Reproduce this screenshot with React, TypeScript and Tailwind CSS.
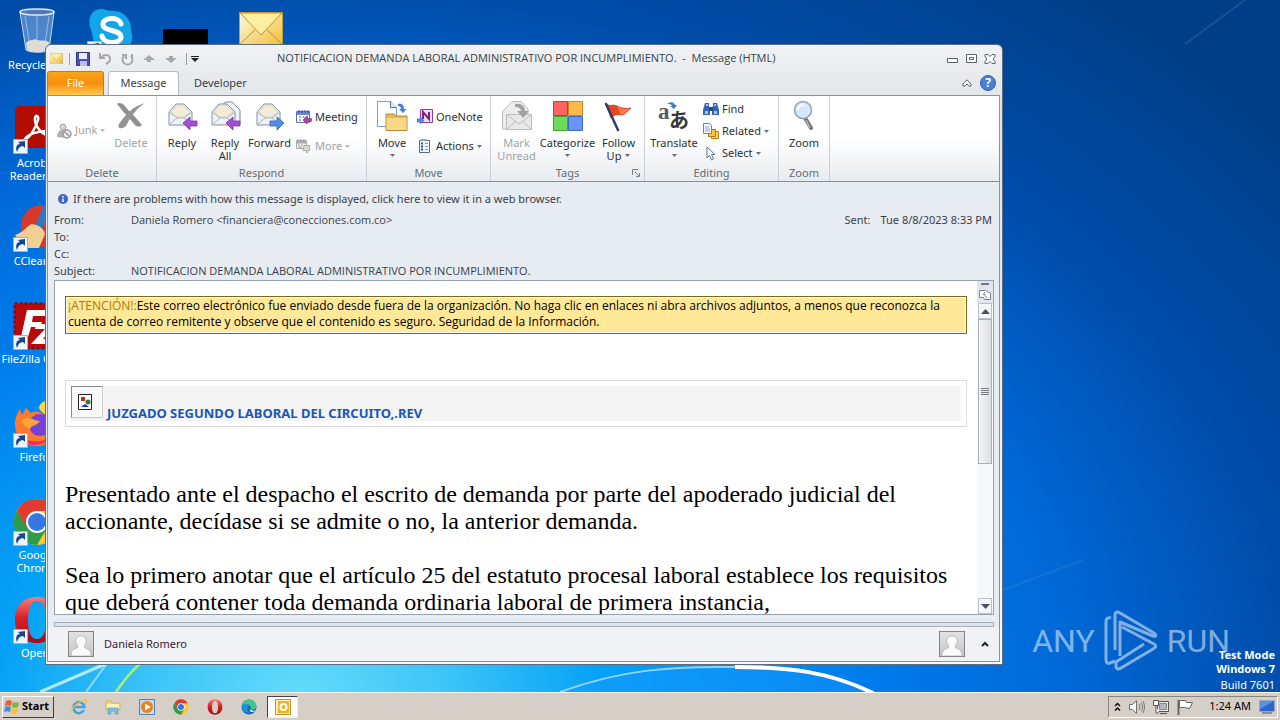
import React from 'react';
import clsx from 'clsx';

type IconProps = { className?: string };

const Caret: React.FC<IconProps> = ({ className }) => (
  <svg viewBox="0 0 5 3" className={clsx('w-[5px] h-[3px] shrink-0', className)}>
    <path d="M0 0h5L2.5 3z" fill="currentColor" />
  </svg>
);

const Envelope: React.FC<IconProps> = ({ className }) => (
  <svg viewBox="0 0 44 34" preserveAspectRatio="none" className={className}>
    <defs>
      <linearGradient id="env" x1="0" y1="0" x2="1" y2="1">
        <stop offset="0" stopColor="#fffbe0" />
        <stop offset="1" stopColor="#f0bd38" />
      </linearGradient>
    </defs>
    <path d="M.5.5h43v33H.5z" fill="url(#env)" stroke="#c99a2e" />
    <path d="M1 32 17 17M43 32 27 17" stroke="#c2922c" fill="none" />
    <path d="M1 1l21 22L43 1z" fill="#fdeea0" stroke="#c2922c" />
  </svg>
);

/* Ribbon icons, 32px */

const OpenMail: React.FC<{ arrow: 'left' | 'right'; double?: boolean }> = ({ arrow, double }) => (
  <svg viewBox="0 0 32 32" className="w-8 h-8">
    {double && (
      <path d="M9 8 17 2h6l8 8v14H12z" fill="#f2f3f6" stroke="#7f8898" />
    )}
    <path d="M3 12 10 4h8l8 8v13H3z" fill="#eef1f6" stroke="#8390a5" />
    <path d="M5 12l6-7h6l7 7-7 5h-6z" fill="#f3ecd6" stroke="#c9c4b0" strokeWidth=".6" />
    <path d="M3 12l8 6h7l8-6M3 25l8-7M26 25l-8-7" fill="none" stroke="#a9b5c7" />
    {arrow === 'left' ? (
      <path d="M17 23l7-6v4h7v5h-7v4z" fill="#a44fd0" stroke="#7c35a8" strokeWidth=".8" />
    ) : (
      <path d="M30 23l-7-6v4h-7v5h7v4z" fill="#5590e8" stroke="#2c5fb4" strokeWidth=".8" />
    )}
  </svg>
);

const DeleteIcon = () => (
  <svg viewBox="0 0 32 32" className="w-8 h-8">
    <path d="M2 4c2-2 5-1 7 1 3 4 7 8 11 12 3 3 5 6 7 8-2 2-5 2-7 0C15 19 8 12 2 4z" fill="#8f8f8f" />
    <path d="M30 3c-7 4-12 11-17 19-1 3-3 6-6 6-2 1-5-1-3-4C10 15 18 6 30 3z" fill="#949494" />
  </svg>
);

const JunkIcon = () => (
  <svg viewBox="0 0 16 16" className="w-4 h-4">
    <circle cx="7" cy="4" r="3" fill="#d8d8d8" stroke="#a2a2a2" />
    <path d="M1 14c0-4 2-7 5-7s5 2 5 5l-2 3z" fill="#b2b2b2" />
    <circle cx="11" cy="11" r="4" fill="#e9e9e9" stroke="#9a9a9a" strokeWidth="1.5" />
    <path d="M8 8.500l6 5" stroke="#9a9a9a" strokeWidth="1.5" />
  </svg>
);

const MeetingIcon = () => (
  <svg viewBox="0 0 16 16" className="w-4 h-4">
    <path d="M.5 2.500h13v11H.5z" fill="#fff" stroke="#5872b0" />
    <path d="M1 3h12v3H1z" fill="#6c8bd0" />
    <path d="M3 1v3M6 1v3M9 1v3M12 1v3" stroke="#344e92" />
    <path d="M3 8h2M6.500 8h2M10 8h2M3 11h2" stroke="#7990c6" strokeWidth="1.500" />
    <path d="M7 11l4-4v2.500h4.500v3H11V15z" fill="#b0439c" stroke="#7c2b78" strokeWidth=".6" />
  </svg>
);

const MoreIcon = () => (
  <svg viewBox="0 0 16 16" className="w-4 h-4">
    <path d="M.5 2.500h10v8H.5z" fill="#f2f2f2" stroke="#aaa" />
    <path d="M1 3h9v2H1zM2 7h2M5 7h2" fill="#aaa" stroke="#aaa" />
    <path d="M2 1v2M5 1v2M8 1v2M2 9h4" stroke="#999" />
    <path d="M8 7.500h5.500v5H12L11 15l-1-2.500H7z" fill="#dadada" stroke="#aaa" />
  </svg>
);

const MoveIcon = () => (
  <svg viewBox="0 0 32 32" className="w-8 h-8">
    <path d="M1.500 1.500h13l6 6v19h-19z" fill="#fff" stroke="#7d9cc8" />
    <path d="M14.500 1.500v6h6" fill="#e8eef8" stroke="#5b6f92" />
    <path d="M22 4c4-1 6 1 6 5h2.500L27 13l-4-4h2c0-2-1-3-3-3z" fill="#3f80de" />
    <path d="M10 14h8l2 2h11v14.500H10z" fill="#e9b957" stroke="#b98b2e" />
    <path d="M10.500 18h20v12h-20z" fill="#f9d88a" />
  </svg>
);

const OneNoteIcon = () => (
  <svg viewBox="0 0 16 16" className="w-4 h-4">
    <path d="M3.500.5h12v13h-12z" fill="#f0dcf2" stroke="#8b3f94" />
    <path d="M6 10V3l6 7V3" fill="none" stroke="#7b2586" strokeWidth="2" />
    <path d="M0 10h3V8l4 3.500L3 15v-2H0z" fill="#4f8be0" stroke="#2d5ca8" strokeWidth=".5" />
  </svg>
);

const ActionsIcon = () => (
  <svg viewBox="0 0 16 16" className="w-4 h-4">
    <path d="M2.500 2.500h10v12h-10z" fill="#f2f6fc" stroke="#58698a" />
    <path d="M4 1h6v2H4z" fill="#96a7c4" />
    <path d="M4 5.500h2M4 8.500h2M4 11.500h2" stroke="#3a4d78" strokeWidth="2" />
    <path d="M8 5.500h3M8 8.500h3M8 11.500h3" stroke="#8496b8" />
  </svg>
);

const MarkUnreadIcon = () => (
  <svg viewBox="0 0 32 32" className="w-8 h-8">
    <path d="M1.500 12 11 1.500h9l7 7.500v20H1.500z" fill="#ededed" stroke="#bcbcbc" />
    <path d="M5.500 14.500h25v15h-25z" fill="#e9e9e9" stroke="#bcbcbc" />
    <path d="M6 15l12 9 12-9M6 29l9-8M30 29l-9-8" fill="none" stroke="#bcbcbc" />
    <path d="M14 4c7-1 10 3 10 7h4l-6 7-6-7h4c0-2-2-4-6-4z" fill="#a2a2a2" />
  </svg>
);

const CategorizeIcon = () => (
  <svg viewBox="0 0 32 32" className="w-8 h-8">
    <path d="M1.500 1.500h14v14h-14z" fill="#ff6460" stroke="#c23d3a" />
    <path d="M16.500 1.500h14v14h-14z" fill="#ffb84a" stroke="#c98724" />
    <path d="M1.500 16.500h14v14h-14z" fill="#6edb5a" stroke="#41a535" />
    <path d="M16.500 16.500h14v14h-14z" fill="#6a94fa" stroke="#3f66c8" />
  </svg>
);

const FlagIcon = () => (
  <svg viewBox="0 0 32 32" className="w-8 h-8">
    <path d="M3 4c5 3 7 0 11 2s7 3 14 2c-4 3-5 6-9 7-4 0-6-2-11 3z" fill="#ec4526" stroke="#b42e18" strokeWidth=".8" />
    <path d="M14 6c5 3 7 4 13 2-4 4-5 6-9 7z" fill="#ff7a48" />
    <path d="M3 4l12 26" stroke="#2d3f6c" strokeWidth="2.500" strokeLinecap="round" />
  </svg>
);

const TranslateIcon = () => (
  <svg viewBox="0 0 32 32" className="w-8 h-8">
    <text x="0" y="19" fontSize="23" fontWeight="bold" fill="#57595c" fontFamily="Liberation Serif, serif">a</text>
    <text x="11" y="28" fontSize="20" fontWeight="bold" fill="#37393c" fontFamily="Noto Sans CJK JP, sans-serif">あ</text>
    <path d="M9 4c4-3 7-2 8 1h2l-3 4-4-3h2c-1-2-2-2-5-2z" fill="#3d7ad6" />
  </svg>
);

const FindIcon = () => (
  <svg viewBox="0 0 16 16" className="w-4 h-4">
    <path d="M2 2h4v3l1 3v6H0V9zM10 2h4l2 7v5H9V8l1-3z" fill="#3764b4" />
    <path d="M6 6h4v4H6z" fill="#26488e" />
    <path d="M2 10h3v3H2zM11 10h3v3h-3zM3 3h2v2H3zM11 3h2v2h-2z" fill="#a9c6f2" />
  </svg>
);

const RelatedIcon = () => (
  <svg viewBox="0 0 16 16" className="w-4 h-4">
    <path d="M8.500 8.500h7v7h-7z" fill="#ffd560" stroke="#b07a18" />
    <path d="M5.500 6.500h7v7h-7z" fill="#ffc53a" stroke="#b07a18" />
    <path d="M.5.5h6l2 2v8h-8z" fill="#f4f8ff" stroke="#6b82ac" />
    <path d="M2 4h4M2 6h5M2 8h5" stroke="#8ba2cc" />
  </svg>
);

const SelectIcon = () => (
  <svg viewBox="0 0 16 16" className="w-4 h-4">
    <path d="M4 2v11l2.500-2.500L8.500 15l2-1-2-4.500H12z" fill="#fff" stroke="#58719f" />
  </svg>
);

const ZoomIcon = () => (
  <svg viewBox="0 0 32 32" className="w-8 h-8">
    <path d="M17 18l6 10" stroke="#6d7178" strokeWidth="4" strokeLinecap="round" />
    <path d="M18 20l4 8" stroke="#b9bec6" strokeWidth="1.500" />
    <circle cx="15" cy="10" r="8.500" fill="#d6e8fc" stroke="#93a0b2" strokeWidth="1.500" />
    <path d="M10 10c0-4 3-5 6-5" fill="none" stroke="#fff" strokeWidth="2" />
  </svg>
);

/* Desktop and taskbar logos */

const BinIcon = () => (
  <svg viewBox="0 0 48 48" className="w-12 h-12">
    <path d="M7 4h34l-5 38c-4 3-19 3-23 0z" fill="#a8c8ee" fillOpacity=".45" stroke="#c9d8ea" />
    <path d="M13 35c3-4 7-2 9-4 4 3 9 0 14 3l-1 8c-5 3-16 3-21 0z" fill="#dedcd4" />
    <path d="M12 8l5 30M24 8v25M36 8l-4 28" stroke="#dcebfb" strokeOpacity=".5" />
    <ellipse cx="24" cy="4" rx="17" ry="3" fill="#4f78b8" stroke="#e1e9f2" strokeWidth="1.500" />
  </svg>
);

const AcrobatIcon = () => (
  <svg viewBox="0 0 48 48" className="w-12 h-12">
    <rect x="2" y="0" width="44" height="42" rx="5" fill="#b30b00" />
    <path d="M12 33c3-5 13-8 23-8 5 0 4 5-1 4-7-2-13-11-12-17 1-4 4-2 3 2-2 7-8 18-13 19z" fill="none" stroke="#fff" strokeWidth="2.500" />
  </svg>
);

const CCleanerIcon = () => (
  <svg viewBox="0 0 48 48" className="w-12 h-12">
    <circle cx="29" cy="22" r="21" fill="#d8372c" />
    <path d="M31 1l7 2-9 22-7-3z" fill="#2f78c4" />
    <path d="M18 20c6 0 13 4 14 10l-6 14H12L2 31c6-2 10-6 16-11z" fill="#efcf92" />
  </svg>
);

const FileZillaIcon = () => (
  <svg viewBox="0 0 48 48" className="w-12 h-12">
    <path d="M1.500 1.500h45v45h-45z" fill="#b80a0a" stroke="#8c0505" strokeWidth="2" strokeDasharray="3 2" />
    <path d="M14 8h20l-2 6H20l-1 6h10l-2 5H18l-3 10H8z" fill="#fff" />
    <path d="M23 22h19l-12 15h10l-2 5H18l14-15H22z" fill="#fff" />
  </svg>
);

const FirefoxIcon = () => (
  <svg viewBox="0 0 48 48" className="w-12 h-12">
    <path d="M32 1c8 5 14 14 14 24 0 12-9 21-22 21S2 37 2 25c0-7 2-12 5-16l2 6 4-7 5 5c5-3 10-1 13 2z" fill="#ff7a2c" />
    <path d="M32 1c8 5 14 14 14 24l-8-8c-8-4-12-6-12-10 1-3 3-5 6-6z" fill="#ffd53e" />
    <path d="M4 30c5 14 30 16 36 2-3 16-33 19-36-2z" fill="#f0305a" />
    <circle cx="27" cy="25" r="11" fill="#7542d8" />
    <path d="M9 20c6-5 12 1 18 1-3 5-9 4-10 8-5-2-8-5-8-9z" fill="#ffa436" />
  </svg>
);

const ChromeIcon: React.FC<IconProps> = ({ className }) => (
  <svg viewBox="0 0 48 48" className={className}>
    <circle cx="24" cy="24" r="23" fill="#fcc934" />
    <path d="M4 12.500A23 23 0 0 0 24 47l10-17-10 4-10-5z" fill="#2f9b48" />
    <path d="M4 12.500 14 30 24 13h20A23 23 0 0 0 4 12.500z" fill="#e03b2f" />
    <circle cx="24" cy="24" r="11" fill="#fff" />
    <circle cx="24" cy="24" r="9" fill="#3478e6" />
  </svg>
);

const OperaIcon: React.FC<IconProps> = ({ className }) => (
  <svg viewBox="0 0 48 48" className={className}>
    <defs>
      <linearGradient id="opera" x1="0" y1="0" x2="0" y2="1">
        <stop offset="0" stopColor="#f5807a" />
        <stop offset=".45" stopColor="#dc1f26" />
        <stop offset="1" stopColor="#a30c14" />
      </linearGradient>
    </defs>
    <path
      fillRule="evenodd"
      d="M24 1C11 1 2 10 2 24s9 23 22 23 22-9 22-23S37 1 24 1zm0 4c6 0 9 7 9 19s-3 19-9 19-9-7-9-19 3-19 9-19z"
      fill="url(#opera)"
    />
  </svg>
);

const SkypeIcon = () => (
  <svg viewBox="0 0 48 48" className="w-12 h-12">
    <path d="M14 1c4 0 6 1 8 2 14-2 23 8 22 20 4 10-2 20-14 20-14 4-25-7-25-19C-1 12 4 1 14 1z" fill="#12a5e8" />
    <path d="M34 16c-2-8-19-7-18 1 1 7 18 4 18 12 0 7-17 8-19-1" fill="none" stroke="#fff" strokeWidth="5" strokeLinecap="round" />
  </svg>
);

const IeIcon = () => (
  <svg viewBox="0 0 16 16" className="w-4 h-4">
    <path d="M13 11a5.500 5.500 0 1 1 .5-3H4" fill="none" stroke="#3fa4e0" strokeWidth="2.500" />
    <path d="M1 14C-1 10 8 1 15 1c1 1 0 3-1 4" fill="none" stroke="#f0c13c" strokeWidth="1.200" />
  </svg>
);

const ExplorerIcon = () => (
  <svg viewBox="0 0 16 16" className="w-4 h-4">
    <path d="M1 2h5l1 2h8v7H1z" fill="#f2d675" stroke="#c5a443" strokeWidth=".6" />
    <path d="M2 5h12v5H2z" fill="#fff2b8" />
    <path d="M3 15V9h10v6h-3v-3H6v3z" fill="#7ac0e6" stroke="#4a91bf" strokeWidth=".6" />
  </svg>
);

const PlayerIcon = () => (
  <svg viewBox="0 0 16 16" className="w-4 h-4">
    <path d="M.5.5h15v15H.5z" fill="#bfdcf4" stroke="#4f86b8" />
    <circle cx="8" cy="8" r="6" fill="#f07f16" />
    <path d="M6 4.500v7l6-3.500z" fill="#fff" />
  </svg>
);

const EdgeIcon = () => (
  <svg viewBox="0 0 16 16" className="w-4 h-4">
    <circle cx="8" cy="8" r="7.500" fill="#1768b8" />
    <path d="M1 6C3-1 14-1 15.500 7c0 4-5 4-6 3 2-4-4-6-8.500-4z" fill="#42c88a" />
    <path d="M1 7c2-3 7-3 8 0-3 0-4 4 0 7-5 0-8-2-8-7z" fill="#1b93d8" />
    <path d="M9 10c1 2 4 2 6 1l-1 1c-3 2-6 1-5-2z" fill="#e8f4fc" />
  </svg>
);

const OutlookIcon = () => (
  <svg viewBox="0 0 16 16" className="w-4 h-4">
    <path d="M.5.5h15v15H.5z" fill="#fff0b8" stroke="#c98f1d" />
    <path d="M3 2h11v12H3z" fill="#f2b128" />
    <circle cx="8.500" cy="8" r="3" fill="none" stroke="#fff" strokeWidth="2" />
  </svg>
);

const WindowsFlag = () => (
  <svg viewBox="0 0 16 16" className="w-4 h-4">
    <path d="M2 2c2-1 4-1 6 0L7 7C5 6 3 6 1 7z" fill="#ee5a2a" />
    <path d="M9 3c2 1 4 1 6 0l-1 5c-2 1-4 1-6 0z" fill="#77b93c" />
    <path d="M1 8c2-1 4-1 6 0l-1 5c-2-1-4-1-6 0z" fill="#3f8ee0" />
    <path d="M8 9c2 1 4 1 6 0l-1 5c-2 1-4 1-6 0z" fill="#f8c32c" />
  </svg>
);

const Shortcut = () => (
  <svg viewBox="0 0 15 15" className="absolute bottom-0 left-0 w-[15px] h-[15px]">
    <path d="M.5.5h14v14H.5z" fill="#eef4fb" stroke="#9fb4cc" />
    <path d="M4 13C2 8 4 5 7 5L5 3l7-1 0 7-2-2c-3 0-5 2-6 6z" fill="#17458e" />
  </svg>
);

const Avatar = () => (
  <div className="w-[26px] h-[26px] border border-[#858585] bg-linear-to-b from-[#e2e2e2] to-[#c6c6c6]">
    <svg viewBox="0 0 24 24" className="w-6 h-6">
      <path d="M12 4c4 0 6 3 5 7-1 2-2 3-2 4 1 2 6 1 7 7v2H2v-2c1-6 6-5 7-7 0-1-1-2-2-4-1-4 1-7 5-7z" fill="#fbfbfb" stroke="#a9a9a9" strokeWidth=".7" />
    </svg>
  </div>
);

/* Ribbon building blocks */

const Group: React.FC<{ title: string; className?: string; launcher?: boolean; children: React.ReactNode }> = ({
  title,
  className,
  launcher,
  children,
}) => (
  <section className={clsx('relative flex flex-col shrink-0 border-r border-[#c9cfd6]', className)}>
    <div className="flex flex-1 min-h-0">{children}</div>
    <h2 className="h-4 text-center text-[#646b76] leading-4">{title}</h2>
    {launcher && (
      <svg viewBox="0 0 8 8" className="absolute right-1 bottom-1 w-2 h-2">
        <path d="M.5 6V.5H6M3 3l4 4M7.500 4v3.500H4" fill="none" stroke="#7b848f" />
      </svg>
    )}
  </section>
);

const BigButton: React.FC<{
  label: string;
  second?: string;
  icon: React.ReactNode;
  caret?: boolean;
  disabled?: boolean;
  className?: string;
}> = ({ label, second, icon, caret, disabled, className }) => (
  <button
    type="button"
    disabled={disabled}
    className={clsx('flex flex-col items-center pt-1 leading-[13px] whitespace-nowrap', disabled && 'text-[#a0a4a9]', className)}
  >
    {icon}
    <span className="mt-1">{label}</span>
    {(second || caret) && (
      <span className="flex h-[13px] items-center gap-1">
        {second}
        {caret && <Caret className="text-[#6a6f76]" />}
      </span>
    )}
  </button>
);

const SmallButton: React.FC<{ label: string; icon: React.ReactNode; caret?: boolean; disabled?: boolean }> = ({
  label,
  icon,
  caret,
  disabled,
}) => (
  <button
    type="button"
    disabled={disabled}
    className={clsx('flex items-center gap-[3px] h-[22px] whitespace-nowrap', disabled && 'text-[#a0a4a9]')}
  >
    {icon}
    <span>{label}</span>
    {caret && <Caret className={disabled ? 'text-[#b4b8bd]' : 'text-[#6a6f76]'} />}
  </button>
);

const Ribbon = () => (
  <div className="flex h-[86px] shrink-0 bg-linear-to-b from-white from-50% to-[#e8ebee] border-b border-[#868d96] text-[#2d3136]">
    <Group title="Delete" className="w-[109px]">
      <div className="flex items-center w-[62px] pl-2">
        <SmallButton label="Junk" icon={<JunkIcon />} caret disabled />
      </div>
      <BigButton label="Delete" icon={<DeleteIcon />} disabled className="w-[42px]" />
    </Group>
    <Group title="Respond" className="w-[210px]">
      <BigButton label="Reply" icon={<OpenMail arrow="left" />} className="w-[50px]" />
      <BigButton label="Reply" second="All" icon={<OpenMail arrow="left" double />} className="w-[36px]" />
      <BigButton label="Forward" icon={<OpenMail arrow="right" />} className="w-[53px]" />
      <div className="flex flex-col gap-[7px] pt-[10px]">
        <SmallButton label="Meeting" icon={<MeetingIcon />} />
        <SmallButton label="More" icon={<MoreIcon />} caret disabled />
      </div>
    </Group>
    <Group title="Move" className="w-[124px]">
      <BigButton label="Move" icon={<MoveIcon />} caret className="w-[50px]" />
      <div className="flex flex-col gap-[7px] pt-[10px]">
        <SmallButton label="OneNote" icon={<OneNoteIcon />} />
        <SmallButton label="Actions" icon={<ActionsIcon />} caret />
      </div>
    </Group>
    <Group title="Tags" className="w-[154px]" launcher>
      <BigButton label="Mark" second="Unread" icon={<MarkUnreadIcon />} disabled className="w-[51px]" />
      <BigButton label="Categorize" icon={<CategorizeIcon />} caret className="w-[51px]" />
      <BigButton label="Follow" second="Up" icon={<FlagIcon />} caret className="w-[51px]" />
    </Group>
    <Group title="Editing" className="w-[134px]">
      <BigButton label="Translate" icon={<TranslateIcon />} caret className="w-[58px]" />
      <div className="flex flex-col pt-0.5">
        <SmallButton label="Find" icon={<FindIcon />} />
        <SmallButton label="Related" icon={<RelatedIcon />} caret />
        <SmallButton label="Select" icon={<SelectIcon />} caret />
      </div>
    </Group>
    <Group title="Zoom" className="w-[51px]">
      <BigButton label="Zoom" icon={<ZoomIcon />} className="w-[50px]" />
    </Group>
  </div>
);

const TitleBar = () => (
  <header className="flex items-center h-[25px] pl-[3px] pr-1">
    <div className="flex items-center w-[227px] gap-2 text-[#a5a9ae]">
      <Envelope className="w-[13px] h-[11px]" />
      <span className="w-px h-3 -mx-0.5 bg-[#9aa0a8]" />
      <svg viewBox="0 0 14 14" className="w-[14px] h-[14px]">
        <path d="M.5.5h13v13H.5z" fill="#4a50b0" stroke="#33387e" />
        <path d="M3 1h8v6H3z" fill="#e8ecfa" />
        <path d="M4 9h7v5H4z" fill="#b9bfe2" />
      </svg>
      <svg viewBox="0 0 14 14" className="w-[14px] h-[14px]">
        <path d="M2 1v5h5M3 6c3-4 9-4 9 1 0 3-2 4-4 5" fill="none" stroke="currentColor" strokeWidth="2" />
      </svg>
      <svg viewBox="0 0 14 14" className="w-[14px] h-[14px]">
        <path d="M4 4a5 5 0 1 0 7 0M6 7V3H2M12 2v3" fill="none" stroke="currentColor" strokeWidth="2" />
      </svg>
      <svg viewBox="0 0 14 14" className="w-[14px] h-[14px]">
        <path d="M7 3l6 5H9v2H5V8H1z" fill="currentColor" />
      </svg>
      <svg viewBox="0 0 14 14" className="w-[14px] h-[14px]">
        <path d="M7 11l6-5H9V4H5v2H1z" fill="currentColor" />
      </svg>
      <span className="w-px h-3 bg-[#9aa0a8]" />
      <svg viewBox="0 0 8 6" className="-ml-1 w-2 h-[6px]">
        <path d="M0 0h8v1H0zM0 2h8L4 6z" fill="#222" />
      </svg>
    </div>
    <h1 className="flex-1 whitespace-pre text-[#3b3f45] font-['Open_Sans',sans-serif]">
      {'NOTIFICACION DEMANDA LABORAL ADMINISTRATIVO POR INCUMPLIMIENTO.  -  Message (HTML)'}
    </h1>
    <div className="flex gap-[7px]">
      <button type="button" aria-label="Minimize">
        <svg viewBox="0 0 12 12" className="w-3 h-3">
          <path d="M1.500 5.500h10v4h-10z" fill="#fff" stroke="#5a616b" />
        </svg>
      </button>
      <button type="button" aria-label="Maximize">
        <svg viewBox="0 0 12 12" className="w-3 h-3">
          <path d="M1.500 1.500h10v8h-10zM4.500 4.500h4v2h-4z" fill="#fff" stroke="#5a616b" />
        </svg>
      </button>
      <button type="button" aria-label="Close">
        <svg viewBox="0 0 12 12" className="w-3 h-3">
          <path d="M1 1.500h3l2 2 2-2h3v2L9 6l2 2.500v2H8l-2-2-2 2H1v-2L3 6 1 3.500z" fill="#fff" stroke="#5a616b" />
        </svg>
      </button>
    </div>
  </header>
);

const TabRow = () => (
  <nav className="flex items-end h-6 pr-1 text-[#3b3f45]">
    <button
      type="button"
      className="w-[57px] h-6 rounded-t-[3px] border border-b-0 border-[#c97a08] bg-linear-to-b from-[#f9a41c] via-[#f88f08] to-[#ffc848] text-white"
    >
      File
    </button>
    <button type="button" className="w-[71px] h-6 ml-1 rounded-t-[3px] border border-b-0 border-[#b6bcc4] bg-white">
      Message
    </button>
    <button type="button" className="h-6 ml-[15px]">
      Developer
    </button>
    <div className="flex items-center gap-2 h-6 ml-auto">
      <svg viewBox="0 0 10 8" className="w-[10px] h-2">
        <path d="M5 .8 9 5v2H7L5 5 3 7H1V5z" fill="#fff" stroke="#5a616b" />
      </svg>
      <button
        type="button"
        aria-label="Help"
        className="w-4 h-4 rounded-full bg-[#4a80d8] border border-[#3560ac] text-white text-[12px] leading-[14px] font-bold"
      >
        ?
      </button>
    </div>
  </nav>
);

const fields = [
  { name: 'From:', value: 'Daniela Romero <financiera@conecciones.com.co>' },
  { name: 'To:', value: '' },
  { name: 'Cc:', value: '' },
  { name: 'Subject:', value: 'NOTIFICACION DEMANDA LABORAL ADMINISTRATIVO POR INCUMPLIMIENTO.' },
];

const MessageHeader = () => (
  <div className="pt-2 pb-px pl-[6px] pr-[7px] text-[#3a3f47]">
    <p className="flex items-center gap-[5px] h-[18px] pl-1 mb-[3px]">
      <svg viewBox="0 0 10 10" className="w-[10px] h-[10px]">
        <circle cx="5" cy="5" r="5" fill="#3f68c6" />
        <path d="M5 2v1.500M5 4.500V8" stroke="#fff" strokeWidth="1.500" />
      </svg>
      If there are problems with how this message is displayed, click here to view it in a web browser.
    </p>
    <div className="flex justify-between">
      <dl>
        {fields.map((field) => (
          <div key={field.name} className="flex h-[17px] leading-[17px]">
            <dt className="w-[77px]">{field.name}</dt>
            <dd className="font-['Open_Sans',sans-serif]">{field.value}</dd>
          </div>
        ))}
      </dl>
      <p className="leading-[17px] whitespace-nowrap">
        <span className="mr-[10px]">Sent:</span>Tue 8/8/2023 8:33 PM
      </p>
    </div>
  </div>
);

const ScrollBar = () => (
  <div className="flex flex-col items-center w-4 shrink-0 bg-[#f7f8f9]">
    <div className="flex flex-col items-center w-full h-[22px] pt-0.5 gap-1 bg-[#e1e6ee]">
      <span className="w-2 h-0.5 bg-[#6f7987]" />
      <svg viewBox="0 0 12 12" className="w-3 h-3">
        <path d="M.5 1.500h6l5 3v6h-6l-1-2h-4zM5 5l3 4M6 3l-2 3" fill="#fff" stroke="#7a838f" />
      </svg>
    </div>
    <button type="button" aria-label="Scroll up" className="grid place-items-center w-[14px] h-4 bg-[#f4f6f8] border border-[#b8c0ca]">
      <svg viewBox="0 0 9 5" className="w-[9px] h-[5px]">
        <path d="M0 5h9L4.500 0z" fill="#46516a" />
      </svg>
    </button>
    <div className="flex flex-col items-center justify-center gap-px w-[14px] h-[145px] bg-linear-to-r from-[#f4f5f6] to-[#dcdfe3] border border-[#a9b0ba]">
      <span className="w-2 h-px bg-[#757d88]" />
      <span className="w-2 h-px bg-[#757d88]" />
      <span className="w-2 h-px bg-[#757d88]" />
      <span className="w-2 h-px bg-[#757d88]" />
    </div>
    <button type="button" aria-label="Scroll down" className="grid place-items-center w-[14px] h-4 mt-auto bg-[#f4f6f8] border border-[#b8c0ca]">
      <svg viewBox="0 0 9 5" className="w-[9px] h-[5px]">
        <path d="M0 0h9L4.500 5z" fill="#46516a" />
      </svg>
    </button>
  </div>
);

const MessageBody = () => (
  <div className="flex flex-1 min-h-0 ml-[6px] mr-[5px] bg-white border border-[#97a2b0]">
    <div className="flex-1 min-w-0 overflow-hidden pt-[15px] px-[10px] text-black">
      <div className="p-px border border-[#7d6420]">
        <p className="h-[34px] pl-px bg-[#ffe998] font-['Open_Sans',sans-serif] text-[12px] leading-4">
          <span className="text-[#a87a08]">¡ATENCIÓN!:</span>
          Este correo electrónico fue enviado desde fuera de la organización. No haga clic en enlaces ni abra archivos
          adjuntos, a menos que reconozca la cuenta de correo remitente y observe que el contenido es seguro. Seguridad
          de la Información.
        </p>
      </div>
      <div className="mt-[46px] p-[5px] border border-[#dcdcdc]">
        <div className="flex items-start h-[35px] bg-[#f4f4f4]">
          <div className="w-8 h-8 pt-[7px] pl-[6px] bg-[#f8f8f8] border border-t-[#888] border-l-[#888] border-b-[#ccc] border-r-[#ccc]">
            <svg viewBox="0 0 14 16" className="w-[14px] h-4">
              <path d="M.5.5h13v15H.5z" fill="#fff" stroke="#222" />
              <path d="M3 3h4v4H3z" fill="#c62828" />
              <circle cx="10" cy="8" r="2.500" fill="#2e7d32" />
              <path d="M3 13l4-3 4 3z" fill="#1a32b0" />
            </svg>
          </div>
          <a href="#" className="self-end ml-1 font-['Noto_Sans',sans-serif] text-[13px] font-bold leading-4 text-[#1a57b5]">
            JUZGADO SEGUNDO LABORAL DEL CIRCUITO,.REV
          </a>
        </div>
      </div>
      <div className="mt-[54px] font-['Liberation_Serif',serif] text-[24px] leading-[27px]">
        <p>
          Presentado ante el despacho el escrito de demanda por parte del apoderado judicial del accionante, decídase si
          se admite o no, la anterior demanda.
        </p>
        <p className="mt-[27px]">
          Sea lo primero anotar que el artículo 25 del estatuto procesal laboral establece los requisitos que deberá
          contener toda demanda ordinaria laboral de primera instancia,
        </p>
      </div>
    </div>
    <ScrollBar />
  </div>
);

const MessageWindow = () => (
  <main className="absolute top-11 left-[45px] right-[277px] bottom-[27px] flex flex-col pt-px pl-px pr-0.5 pb-0.5 rounded-t-md border border-[#5b6b80] bg-linear-to-b from-[#f0f2f4] via-[#e0e4e8] via-10% to-[#f6f7f8] text-[11px]">
    <TitleBar />
    <TabRow />
    <div className="flex flex-col flex-1 min-h-0 border border-[#8a929c] bg-[#e7ebf2]">
      <Ribbon />
      <MessageHeader />
      <MessageBody />
      <div className="h-[5px] shrink-0 ml-[6px] mr-[5px] mt-[7px] border border-[#a5afbc] bg-[#dde2e9]" />
      <footer className="flex items-center h-[34px] shrink-0 pl-5 pr-[10px] bg-[#f0f2f5] text-[#3d1838]">
        <Avatar />
        <span className="ml-[10px]">Daniela Romero</span>
        <div className="flex items-center gap-4 ml-auto">
          <Avatar />
          <svg viewBox="0 0 8 6" className="w-2 h-[6px]">
            <path d="M1 5l3-3 3 3" fill="none" stroke="#222" strokeWidth="2" />
          </svg>
        </div>
      </footer>
    </div>
  </main>
);

const shortcuts = [
  { label: 'Recycle Bin', icon: <BinIcon />, link: false },
  { label: 'Acrobat Reader DC', icon: <AcrobatIcon />, link: true },
  { label: 'CCleaner', icon: <CCleanerIcon />, link: true },
  { label: 'FileZilla\u00a0Client', icon: <FileZillaIcon />, link: true },
  { label: 'Firefox', icon: <FirefoxIcon />, link: true },
  { label: 'Google Chrome', icon: <ChromeIcon className="w-12 h-12" />, link: true },
  { label: 'Opera', icon: <OperaIcon className="w-12 h-12" />, link: true },
];

const Wallpaper = () => (
  <svg viewBox="0 0 1280 692" preserveAspectRatio="none" className="absolute inset-0 w-full h-full">
    <defs>
      <radialGradient id="sky" gradientUnits="userSpaceOnUse" cx="0" cy="0" r="1" gradientTransform="translate(300 700) scale(1250 900)">
        <stop offset="0" stopColor="#66dcfa" />
        <stop offset=".12" stopColor="#3cc4f8" />
        <stop offset=".24" stopColor="#06a2f6" />
        <stop offset=".45" stopColor="#007cec" />
        <stop offset=".62" stopColor="#0068d6" />
        <stop offset=".8" stopColor="#004ca8" />
        <stop offset="1" stopColor="#003f88" />
      </radialGradient>
    </defs>
    <path d="M0 0h1280v692H0z" fill="url(#sky)" />
    <path d="M40 692 110 662" stroke="#d8f6ff" strokeOpacity=".8" strokeWidth="3" />
    <path d="M86 692l22-30" stroke="#b8f0ff" strokeOpacity=".7" strokeWidth="2" />
    <path d="M116 692c8-12 14-20 26-30" stroke="#a8f070" strokeWidth="2.500" fill="none" />
    <path d="M560 692c60-24 120-28 180-26 50 0 90 6 138 26" fill="#1a98ff" fillOpacity=".4" />
    <path d="M560 692c60-22 110-26 175-25" fill="none" stroke="#8fd4ff" strokeWidth="2" />
    <path d="M735 667c55 0 95 5 138 26" fill="none" stroke="#fff" strokeWidth="4" />
    <path d="M1185 44 1245 0M1003 590l80-30" stroke="#4d90cc" strokeOpacity=".25" strokeWidth="2" />
  </svg>
);

const Watermark = () => (
  <div className="absolute right-[50px] bottom-[20px] flex items-center gap-2 text-white/50 font-['Roboto',sans-serif] text-[32px] leading-none">
    <span>ANY</span>
    <svg viewBox="0 0 56 62" className="w-[56px] h-[62px]">
      <path
        d="M8 8C4 7 3 9 3 12v38c0 3 2 4 4 3l5-2M12 40V5c0-3 2-4 5-2l34 20c3 2 2 4-1 3L17 12v34M19 17l32 17c3 2 2 3-1 5L18 58c-3 2-5 1-5-2v-4l28-18"
        fill="none"
        stroke="currentColor"
        strokeWidth="3"
        strokeLinejoin="round"
      />
    </svg>
    <span>RUN</span>
  </div>
);

const Taskbar = () => (
  <footer className="relative flex items-center h-7 shrink-0 pl-0.5 pr-0.5 border-t border-white bg-[#d5cfc8] text-[11px] text-black">
    <button
      type="button"
      className="flex items-center gap-0.5 w-[52px] h-[22px] pl-px border border-t-white border-l-white border-b-[#404040] border-r-[#404040] font-bold"
    >
      <WindowsFlag />
      Start
    </button>
    <div className="flex items-center gap-[18px] ml-[17px]">
      <IeIcon />
      <ExplorerIcon />
      <PlayerIcon />
      <ChromeIcon className="w-4 h-4" />
      <OperaIcon className="w-4 h-4" />
      <EdgeIcon />
    </div>
    <button
      type="button"
      aria-label="Outlook"
      className="grid place-items-center w-[31px] h-[22px] ml-[10px] bg-white border border-t-[#404040] border-l-[#404040] border-b-[#eee] border-r-[#eee]"
    >
      <OutlookIcon />
    </button>
    <div className="flex items-center gap-2 h-[22px] ml-auto pl-[5px] pr-0.5 border border-t-[#8a857e] border-l-[#8a857e] border-b-white border-r-white">
      <svg viewBox="0 0 7 10" className="w-[7px] h-[10px]">
        <path d="M1 4l2.500-2.500L6 4M1 8.500 3.500 6 6 8.500" fill="none" stroke="#111" strokeWidth="1.500" />
      </svg>
      <svg viewBox="0 0 16 16" className="w-4 h-4">
        <path d="M.5 5.500h3l4-4v13l-4-4h-3z" fill="#fff" stroke="#6f6f6f" />
        <path d="M10 5c1 2 1 4 0 6M12 3.500c2 3 2 6 0 9M14 2c2 4 2 8 0 12" fill="none" stroke="#777" />
      </svg>
      <svg viewBox="0 0 16 16" className="w-4 h-4">
        <path d="M4.500 2.500h11v10h-11z" fill="#e8e8e6" stroke="#555" />
        <path d="M6.500 4.500h7v6h-7z" fill="#b4b8bc" stroke="#888" />
        <path d="M7 14.500h7M.5 1.500h5v5h-5zM3 6v8h3" fill="#fff" stroke="#555" />
      </svg>
      <svg viewBox="0 0 16 16" className="w-4 h-4">
        <path d="M1.500 1v15" stroke="#666" strokeWidth="2" />
        <path d="M2.500 1.500h6l1 2h6l-3 6-5-1h-5z" fill="#fff" stroke="#666" />
      </svg>
      <time className="ml-2 whitespace-nowrap">1:24 AM</time>
      <svg viewBox="0 0 16 14" className="w-4 h-[14px]">
        <path d="M.5.5h15v11H.5z" fill="#2f66c4" stroke="#93a8c8" />
        <path d="M1 1h14L1 9z" fill="#5c90e4" />
        <path d="M3 13h10" stroke="#2c4a80" />
      </svg>
    </div>
  </footer>
);

const App: React.FC = () => (
  <div className="flex flex-col h-screen overflow-hidden font-['Noto_Sans',sans-serif]">
    <div className="relative flex-1 min-h-0 overflow-hidden bg-[#0060cc]">
      <Wallpaper />
      <div className="relative flex pt-2 text-white text-[11px] leading-[13px] text-center">
        <ul className="w-[74px]">
          {shortcuts.map((item) => (
            <li key={item.label} className="flex flex-col items-center h-[98px]">
              <div className="relative">
                {item.icon}
                {item.link && <Shortcut />}
              </div>
              <span className="mt-0.5">{item.label}</span>
            </li>
          ))}
        </ul>
        <div className="relative self-start mx-[13px]">
          <SkypeIcon />
          <Shortcut />
        </div>
        <div className="w-[45px] h-8 mt-[21px] ml-[15px] bg-black" />
        <Envelope className="w-11 h-[34px] mt-1 ml-[31px]" />
      </div>
      <Watermark />
      <div className="absolute right-[5px] bottom-0 text-right text-white text-[11px] leading-[14px]">
        <p className="font-bold">Test Mode</p>
        <p className="font-bold">Windows 7</p>
        <p className="mt-0.5">Build 7601</p>
      </div>
      <MessageWindow />
    </div>
    <Taskbar />
  </div>
);

export default App;
